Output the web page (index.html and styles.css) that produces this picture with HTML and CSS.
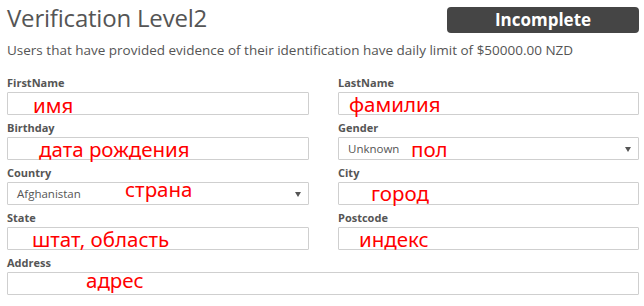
FILE: index.html
```html
<!DOCTYPE html>
<html lang="en">
<head>
<meta charset="utf-8">
<title>Verification Level2</title>
<link rel="stylesheet" href="styles.css">
</head>
<body>
<div class="page">
  <div class="header">
    <h1 class="title">Verification Level2</h1>
    <div class="badge">Incomplete</div>
  </div>
  <p class="lead">Users that have provided evidence of their identification have daily limit of $50000.00 NZD</p>
  <div class="form">
    <div class="field">
      <label class="label">FirstName</label>
      <div class="box"><span class="note n-first">имя</span></div>
    </div>
    <div class="field">
      <label class="label">LastName</label>
      <div class="box"><span class="note n-last">фамилия</span></div>
    </div>
    <div class="field">
      <label class="label">Birthday</label>
      <div class="box"><span class="note n-birth">дата рождения</span></div>
    </div>
    <div class="field">
      <label class="label">Gender</label>
      <div class="box select"><span class="value">Unknown</span><span class="caret"></span><span class="note n-gender">пол</span></div>
    </div>
    <div class="field">
      <label class="label">Country</label>
      <div class="box select"><span class="value">Afghanistan</span><span class="caret"></span><span class="note n-country">страна</span></div>
    </div>
    <div class="field">
      <label class="label">City</label>
      <div class="box"><span class="note n-city">город</span></div>
    </div>
    <div class="field">
      <label class="label">State</label>
      <div class="box"><span class="note n-state">штат, область</span></div>
    </div>
    <div class="field">
      <label class="label">Postcode</label>
      <div class="box"><span class="note n-post">индекс</span></div>
    </div>
    <div class="field wide">
      <label class="label">Address</label>
      <div class="box"><span class="note n-addr">адрес</span></div>
    </div>
  </div>
</div>
</body>
</html>
```
FILE: styles.css
```css
html, body {
  margin: 0;
  padding: 0;
  background: #ffffff;
}
.page {
  width: 632px;
  padding: 5px 5px 0 7px;
  font-family: "Open Sans", "Noto Sans", sans-serif;
  color: #555;
}
.header {
  display: flex;
  justify-content: space-between;
  align-items: flex-start;
  height: 28px;
}
.title {
  margin: 0;
  font-size: 24px;
  line-height: 26px;
  font-weight: 400;
  color: #555;
  letter-spacing: -0.2px;
}
.badge {
  margin-top: 2px;
  width: 192px;
  height: 26px;
  border-radius: 4px;
  background: #454545;
  color: #fff;
  font-weight: 700;
  font-size: 17px;
  line-height: 26px;
  text-align: center;
}
.lead {
  margin: 8px 0 0;
  font-size: 13.5px;
  line-height: 18px;
  color: #555;
}
.form {
  margin-top: 15px;
  display: grid;
  grid-template-columns: 302px 301px;
  column-gap: 29px;
  row-gap: 4px;
}
.field.wide {
  grid-column: 1 / -1;
}
.label {
  display: block;
  font-size: 11px;
  line-height: 17px;
  font-weight: 700;
  color: #555;
  margin-bottom: 1px;
}
.box {
  position: relative;
  box-sizing: border-box;
  height: 23px;
  border: 1px solid #cfcfcf;
  border-radius: 1px;
  background: #fff;
}
.select {
  display: flex;
  align-items: center;
  justify-content: space-between;
  padding: 0 7px 0 9px;
}
.value {
  font-size: 11.5px;
  color: #555;
}
.caret {
  width: 0;
  height: 0;
  border-left: 3px solid transparent;
  border-right: 3px solid transparent;
  border-top: 5px solid #555;
  margin-top: 1px;
}
.note {
  position: absolute;
  font-family: "Noto Sans", "Open Sans", sans-serif;
  font-size: 20.5px;
  line-height: 21px;
  color: #ff0000;
  white-space: nowrap;
}
.n-first { left: 25px; top: 2px; }
.n-last { left: 10px; top: 1px; }
.n-birth { left: 31px; top: 1px; }
.n-gender { left: 72px; top: 1px; }
.n-country { left: 117px; top: -4px; }
.n-city { left: 32px; top: 0px; }
.n-state { left: 24px; top: 1px; }
.n-post { left: 20px; top: 1px; }
.n-addr { left: 78px; top: -3px; }
```
